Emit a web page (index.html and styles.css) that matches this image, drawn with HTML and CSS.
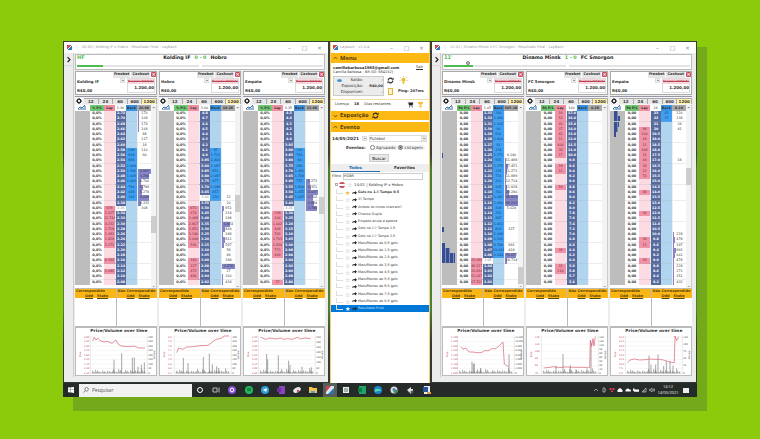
FILE: index.html
```html
<!DOCTYPE html>
<html lang="pt-BR">
<head>
  <meta charset="UTF-8" />
  <title>LayBack</title>
  <link rel="stylesheet" href="styles.css">
</head>
<body>
  <div class="desktop">
    <div class="windows">
      <div class="window game">
        <div class="titlebar">
          <i class="app-icon"></i><span class="dots">⁝</span>
          <span class="title">00:00 | Kolding IF x Hobro - Resultado Final - LayBack</span>
          <span class="controls"><b>–</b><b>□</b><b>×</b></span>
        </div>
        <div class="content">
          <div class="side"><svg viewBox="0 0 9 13"><path d="M3.500 4.500l2.500 2.700l-2.500 2.700"/></svg></div>
          <div class="main">
            <div class="score">
              <span class="time">HF</span>
              <div class="match"><span>Kolding IF</span><em>0 - 0</em><span>Hobro</span></div>
              <div class="progress"><i></i><i></i></div>
            </div>
            <div class="panels" id="left"></div>
          </div>
        </div>
      </div>

      <div class="window menu">
        <div class="titlebar">
          <i class="app-icon"></i>
          <span class="title">Layback - v1.0.4</span>
          <span class="controls"><b>–</b><b>□</b><b>×</b></span>
        </div>
        <div class="bar"><svg viewBox="0 0 6 4"><path d="M1 3L3 1L5 3"/></svg>Menu</div>
        <div class="account">
          <div class="line"><b>camillabarbosa1983@gmail.com</b><u>Sair</u></div>
          <div class="name">Camilla Barbosa - BR (ID: 684152)</div>
          <div class="funds">
            <div class="balance">
              <div><i class="eye"></i><span>Saldo:</span><b>-</b></div>
              <div><span>Exposição:</span><b>R$0,00</b></div>
              <div><span>Disponível:</span><b>-</b></div>
            </div>
            <div class="tools">
              <svg class="refresh" viewBox="0 0 8 8"><path d="M1.3 4A2.7 2.7 0 0 1 6 2.2M6.7 4A2.7 2.7 0 0 1 2 5.8"/><path class="fill" d="M5 3h2.5V.6zM3 5H.5v2.4z"/></svg>
              <svg class="bulb" viewBox="0 0 8 8"><circle cx="4" cy="3.4" r="1.8"/><path d="M3.2 5h1.6v2H3.2z"/><path class="rays" d="M4 0v1M.8 1l.8.6M7.2 1l-.8.6M.4 4h1M6.6 4h1"/></svg>
              <i class="note"></i>
              <b>Ping: 207ms</b>
            </div>
          </div>
        </div>
        <div class="licence">
          <span>Licença</span><b>18</b><span>Dias restantes</span>
          <svg viewBox="0 0 8 8"><path d="M0 1h1.3l1 4h4l1-3.2H2z"/><circle cx="3" cy="6.7" r=".7"/><circle cx="6" cy="6.7" r=".7"/></svg>
          <svg class="trophy" viewBox="0 0 8 8"><path d="M1 1h6c0 2-1 3-2.4 3.4V6H6v1H2V6h1.4V4.4C2 4 1 3 1 1z"/></svg>
        </div>
        <div class="bar exposure"><svg viewBox="0 0 6 4"><path d="M1 1L3 3L5 1"/></svg>Exposição
          <svg class="refresh" viewBox="0 0 8 8"><path d="M1.3 4A2.7 2.7 0 0 1 6 2.2M6.7 4A2.7 2.7 0 0 1 2 5.8"/><path class="fill" d="M5 3h2.5V.6zM3 5H.5v2.4z"/></svg>
        </div>
        <div class="bar"><svg viewBox="0 0 6 4"><path d="M1 3L3 1L5 3"/></svg>Evento</div>
        <div class="filters">
          <div class="row"><b class="date">14/05/2021</b><i class="drop"></i><span class="select">Futebol<i class="drop"></i></span></div>
          <div class="row radios"><b>Eventos:</b><span><i></i>Agrupado <i class="on"></i>Listagem</span></div>
          <button>Buscar</button>
        </div>
        <div class="tabs"><span class="active">Todos</span><span>Favoritos</span></div>
        <div class="search">Filtro: <span>HOBR</span></div>
        <div class="root"><i class="plus"></i><i class="flag"></i><span class="star">☆</span>14:01 | Kolding IF x Hobro</div>
        <div class="tree" id="tree"></div>
      </div>

      <div class="window game right">
        <div class="titlebar">
          <i class="app-icon"></i><span class="dots">⁝</span>
          <span class="title">12:01 | Dinamo Minsk x FC Smorgon - Resultado Final - LayBack</span>
          <span class="controls"><b>–</b><b>□</b><b>×</b></span>
        </div>
        <div class="content">
          <div class="side"><svg viewBox="0 0 9 13"><path d="M3.500 4.500l2.500 2.700l-2.500 2.700"/></svg></div>
          <div class="main">
            <div class="score">
              <span class="time">11'</span>
              <div class="match"><span>Dinamo Minsk</span><em>1 - 0</em><span>FC Smorgon</span></div>
              <div class="progress"><i></i><i></i></div>
              <i class="ball"></i>
            </div>
            <div class="panels" id="right"></div>
          </div>
        </div>
      </div>
    </div>

    <div class="taskbar">
      <svg class="start" viewBox="0 0 6 6"><path d="M0 .6l2.7-.3v2.5H0zM3 .3L6 0v2.8H3zM0 3.1h2.7v2.5L0 5.3zM3 3.1h3V6l-3-.4z"/></svg>
      <div class="find"><svg viewBox="0 0 6 6"><circle cx="3.6" cy="2.3" r="1.8"/><path d="M2.3 3.6L.4 5.6"/></svg>Pesquisar</div>
      <div class="apps" id="apps"></div>
      <div class="tray">
        <svg viewBox="0 0 6 6"><path d="M1 4l2-2l2 2"/></svg>
        <svg viewBox="0 0 6 6"><path d="M2 1h2v4H2zM4 3h1"/></svg>
        <svg class="red" viewBox="0 0 6 6"><path d="M.5 1h2v2h-2zM3.5 1h2v2h-2zM2 3.5h2v1.6H2z"/></svg>
        <svg class="solid" viewBox="0 0 6 6"><path d="M1 5a1.3 1.3 0 0 1 .2-2.4a1.8 1.8 0 0 1 3.5 0A1.3 1.3 0 0 1 5 5z"/></svg>
        <svg class="solid" viewBox="0 0 6 6"><path d="M.7 4.6a1.2 1.2 0 0 1 .5-2a1.7 1.7 0 0 1 3.2 0a1.1 1.1 0 0 1 1 2z"/></svg>
        <svg class="solid" viewBox="0 0 6 6"><path d="M0 1.4h1.5v1H6v2.4H1.5L0 3.6z"/></svg>
        <svg viewBox="0 0 6 6"><path d="M1 5h4V1zM3 5V3"/></svg>
        <svg viewBox="0 0 6 6"><path d="M.5 2.3h1L3 1v4L1.500 3.700h-1zM4 2q.8 1 0 2M5 1.300q1.200 1.700 0 3.400"/></svg>
      </div>
      <div class="clock">14:12<br>14/05/2021</div>
      <i class="notice"></i>
    </div>
  </div>
  <script src="script.js"></script>
</body>
</html>
```
FILE: styles.css
```css
* { box-sizing: border-box; }
body {
  margin: 0;
  width: 760px;
  height: 439px;
  overflow: hidden;
  background: #8ccb0c;
  font-family: "DejaVu Sans", sans-serif;
  font-size: 4px;
  line-height: 5px;
  color: #333;
  white-space: nowrap;
}
i, em { font-style: normal; }
svg { display: block; flex: none; }

.desktop {
  width: 634px;
  height: 356px;
  margin: 41px 0 0 63px;
  box-shadow: 10px 14px 0 #73a91b, 10px 6px 0 #73a91b;
  background: linear-gradient(#3a4038, #39403a 32%, #4c7c38 36%, #507f39 75%, #343a33 85%);
}
.windows {
  display: flex;
  height: 342px;
  padding: 1px 0 0 1px;
}
.window {
  height: 341px;
  overflow: hidden;
}
.game {
  width: 264px;
  height: 340px;
  background: #ececec;
}
.menu {
  width: 100px;
  margin: 0 2px;
  background: #fff;
  border: solid #f4cf72;
  border-width: 0 1px;
}

/* title bar */
.titlebar {
  display: flex;
  align-items: center;
  height: 11px;
  padding-left: 3px;
  background: #fff;
  color: #999;
}
.app-icon {
  width: 5px;
  height: 5px;
  background: linear-gradient(135deg, #d8484f 45%, #e8eef5 45% 52%, #2f7fc4 52%);
}
.dots { width: 10px; text-align: center; }
.menu .titlebar { padding-left: 2px; }
.menu .title { margin-left: 2px; }
.title { font-size: 3.550px; }
.controls {
  display: flex;
  margin-left: auto;
  font-size: 6px;
  color: #888;
}
.controls b { width: 15px; font-weight: normal; text-align: center; }
.game .controls { margin-right: 1px; }

/* match header */
.content { display: flex; }
.side {
  width: 10px;
  height: 324px;
  border-right: 1px solid #ccc;
}
.side svg {
  width: 9px;
  height: 13px;
  border-bottom: 1px solid #ddd;
  fill: none;
  stroke: #222;
  stroke-width: 1.400;
}
.main { width: 251px; padding-left: 1px; }
.right .side { width: 9px; }
.score {
  position: relative;
  height: 16px;
  margin-top: 1px;
  border: 1px solid #bbb;
  background: #fff;
}
.time {
  position: absolute;
  left: 1px;
  top: 0;
  font-size: 5px;
  font-weight: bold;
  color: #4fc04f;
}
.match {
  display: flex;
  justify-content: center;
  gap: 4px;
  height: 10px;
  padding-right: 10px;
  font: bold 4.800px/6px "DejaVu Sans", sans-serif;
  color: #222;
}
.right .match { padding: 0 0 0 2px; }
.match em { color: #3db63d; }
.progress { display: flex; gap: 3px; padding: 0 1px; }
.progress i { flex: 1; height: 2px; background: linear-gradient(90deg, #4dbb4d 26px, #e3e3e3 26px); }
.progress i + i { background: #e3e3e3; }
.right .progress i:first-child { background: linear-gradient(90deg, #4dbb4d 29px, #e3e3e3 29px); }
.ball {
  position: absolute;
  left: 23px;
  top: 6px;
  width: 4px;
  height: 4px;
  border: 1px solid #777;
  border-radius: 50%;
  background: #ccc;
}

/* runner panel */
.panels { display: flex; gap: 2px; margin-top: 1px; }
.panel { width: 82px; flex: none; }
.runner {
  display: flex;
  justify-content: space-between;
  height: 24px;
  border: 1px solid #aaa;
  background: #fff;
  font-weight: bold;
}
.who { display: flex; flex-direction: column; gap: 4px; width: 35px; padding: 7px 0 0 1px; font-size: 3.900px; }
.cash { position: relative; width: 44px; text-align: right; }
.buttons { display: flex; justify-content: flex-end; gap: 1px; height: 6px; font-size: 3.600px; }
.buttons span { background: #e6e6e6; padding: 0 1px; }
.buttons .close {
  width: 5px;
  height: 5px;
  padding: 0;
  border-radius: 1px;
  background: #c94a5e;
  color: #fff;
  font-size: 5px;
  line-height: 5px;
  text-align: center;
}
.stake {
  width: 28px;
  height: 15px;
  margin-left: 15px;
  border: 1px solid #ddd;
  font-size: 4px;
  line-height: 6px;
}
.stake s { display: block; height: 6px; font-size: 2.600px; line-height: 5px; text-align: center; color: #b94455; background: linear-gradient(#f7d8dc 5px, #fff 5px); }
.drop {
  display: inline-block;
  width: 5px;
  height: 5px;
  border: 1px solid #ddd;
  background: linear-gradient(#999, #999) center / 2px 1px no-repeat #eee;
}
.cash .drop { position: absolute; left: 8px; top: 6px; }
.stakes {
  display: flex;
  align-items: center;
  height: 9px;
  margin-top: 1px;
  border-top: 1px solid #9a96aa;
  background: #f3f3f3;
}
.gear { width: 8px; height: 6px; margin-right: 1px; }
.stakes span {
  flex: 1 0 0;
  height: 6px;
  border: solid #aaa;
  border-width: 1px 1px 0 0;
  background: #e7e7e7;
  font: bold 4px/5px "DejaVu Sans", sans-serif;
  text-align: center;
}
.stakes span:last-child { background: #fff2ad; }

/* price ladder: history, p/l, lay, price, back, volume */
.ladder {
  display: flex;
  height: 183px;
  background: #fff;
  border-right: 1px solid #ccc;
}
.rows { width: 76px; }
.step, .head {
  display: grid;
  grid-template-columns: 15px 14px 11px 11px 11px 14px;
  height: 5.270px;
  font: 3.300px/5px "DejaVu Sans", sans-serif;
  text-align: center;
  overflow: hidden;
}
.head { height: 6px; font: bold 3.300px/6px "DejaVu Sans", sans-serif; }
.head svg { width: 8px; height: 5px; margin-left: 3px; fill: none; stroke: #356ca8; }
.head .c1 { background: #70c873; }
.head .c2 { background: #ef8fa2; }
.head .c3 { font-weight: normal; }
.head .c4 { background: #3a91e0; }
.head .c5 { background: #aaa; }
.step > * { border-bottom: 1px solid rgba(170, 170, 170, .22); }
.step .hist { position: relative; background: #bdbdbd; border: 0; }
.hist i { position: absolute; right: 0; top: 0; height: 5px; background: repeating-linear-gradient(90deg, #364f91 0 3px, #8389b8 3px 4px); }
.right .hist i { right: auto; left: 4px; }
.right .panel:first-child .hist i { left: 0; }
.step .pl { font-weight: bold; font-size: 3.500px; }
.lay { background: #fddbe2; }
.lay.on { background: #f292a6; color: #6d2c3c; }
.price { background: #566a9d; color: #fff; font-weight: bold; border-left: 1px solid #eee; }
.price.last { background: #fff; color: #777; font-weight: normal; }
.back { background: #b1d5ef; }
.back.on { background: #3f9ff3; color: #124572; }
.vol { border-left: 1px solid #eee; }
.scroll {
  position: relative;
  width: 5px;
  background: #f3f3f3;
  font-size: 4px;
}
.scroll::before { content: "^"; position: absolute; left: 1px; top: 1px; }
.scroll::after { content: "⌄"; position: absolute; left: 1px; bottom: 0; }
.thumb { position: absolute; left: 0; width: 5px; height: 17px; background: #cdcdcd; }

/* matched bets */
.bets { display: flex; gap: 1px; height: 39px; padding-top: 1px; background: #bbb; }
.bets div { flex: 1; height: 37px; background: #fff; }
.bets p {
  height: 9px;
  margin: 0;
  padding-left: 1px;
  background: #fbb615;
  font: bold 3.500px/4.500px "DejaVu Sans", sans-serif;
  color: #5b450e;
}
.bets u { margin-left: 9px; }
.bets u + u { margin-left: 4px; }
.chart { display: block; width: 82px; height: 49px; border: 1px solid #bbb; background: #fff; }
.chart .heading { font: bold 12.500px "DejaVu Sans", sans-serif; fill: #333; }
.chart .tick { font-size: 7px; fill: #c4455b; }
.chart .tick.r { fill: #444; }
.chart .grid { stroke: #eee; stroke-width: 1.500; }
.chart .axis { stroke: #bbb; fill: none; }
.chart .prices { fill: none; stroke: #d65b6b; stroke-width: 2; }
.chart .volumes { fill: none; stroke: #777; stroke-width: 2; }

/* menu window */
.bar {
  display: flex;
  align-items: center;
  gap: 2px;
  height: 10px;
  padding-left: 2px;
  background: #fdb913;
  font: bold 5.800px/9px "Open Sans", sans-serif;
  color: #4d3908;
}
.bar svg { width: 5px; height: 4px; fill: none; stroke: #4d3908; }
.bar .refresh { width: 7px; height: 7px; margin-left: 1px; stroke: #222; }
.bar.exposure { height: 9px; margin-bottom: 2px; }
.refresh { fill: none; stroke: #222; stroke-width: 1.200; }
.refresh .fill { fill: #222; stroke: none; }
.account { height: 36px; padding: 2px 6px 0 2px; }
.line { display: flex; justify-content: space-between; font-size: 3.600px; }
.line b { font-size: 3.800px; letter-spacing: -.1px; }
.name { font-size: 3.500px; }
.funds { display: flex; margin-top: 1px; }
.balance {
  width: 51px;
  height: 20px;
  border: 1px solid #ccc;
  background: #ececec;
}
.balance div { position: relative; display: flex; height: 6px; line-height: 6px; }
.balance span { width: 29px; text-align: right; }
.balance b { width: 20px; text-align: right; font-size: 3.500px; }
.eye { position: absolute; left: 3px; top: 2px; width: 5px; height: 3px; border-radius: 50%; background: #4c94cf; }
.tools { position: relative; width: 41px; }
.tools > * { position: absolute; }
.tools .refresh { left: 3px; top: 1px; width: 7px; height: 7px; }
.bulb { left: 15px; top: 0; width: 9px; height: 9px; fill: #f1bb35; }
.rays { stroke: #c9a13a; stroke-width: .5; }
.note { left: 4px; top: 12px; width: 5px; height: 7px; border: 1px solid #e3b643; background: #fff3cc; }
.tools b { left: 14px; top: 13px; font-size: 3.700px; }
.licence {
  display: flex;
  align-items: center;
  gap: 5px;
  height: 10px;
  margin-bottom: 2px;
  padding-left: 4px;
  border-top: 1px solid #f6dfa3;
  font-size: 3.700px;
}
.licence svg { width: 7px; height: 7px; margin-left: 11px; fill: #222; }
.licence .trophy { margin-left: -2px; fill: #f4bf43; }
.filters { height: 32px; padding: 2px 2px 0 1px; }
.row { display: flex; align-items: center; height: 9px; }
.date { width: 30px; font-size: 4.300px; }
.select {
  display: flex;
  flex: 1;
  justify-content: space-between;
  align-items: center;
  height: 7px;
  margin-left: 2px;
  border: 1px solid #ddd;
}
.radios b { width: 38px; padding-left: 14px; }
.radios span { display: flex; align-items: center; gap: 1px; width: 55px; background: #f4f4f4; }
.radios i { width: 5px; height: 5px; border: 1px solid #888; border-radius: 50%; background: #fff; }
.radios .on { margin-left: 2px; background: #444; box-shadow: inset 0 0 0 .5px #fff; }
.filters button {
  display: block;
  width: 20px;
  height: 8px;
  margin: 2px 0 0 37px;
  padding: 0;
  border: 1px solid #ccc;
  background: #e9e9e9;
  font: 4px/5px "DejaVu Sans", sans-serif;
}
.tabs {
  display: flex;
  height: 8px;
  background: #eee;
  font: bold 4px/8px "DejaVu Sans", sans-serif;
  text-align: center;
}
.tabs span { flex: 1; }
.tabs .active { color: #286baf; border-bottom: 1px solid #286baf; }
.search { display: flex; height: 8px; margin-top: 1px; padding-left: 1px; font-size: 3.500px; line-height: 7px; }
.search span { width: 80px; height: 7px; margin-left: 1px; border: 1px solid #ccc; line-height: 5px; }
.root { display: flex; align-items: center; height: 7px; margin-bottom: 1px; padding: 0 0 0 4px; font-size: 3.800px; }
.plus { width: 3px; height: 3px; border: 1px solid #aaa; }
.flag { width: 6px; height: 6px; margin: 0 2px 0 1px; border-radius: 50%; background: linear-gradient(#d04d58 35%, #fff 35% 60%, #c54a58 60%); }
.star { width: 7px; font-size: 6px; color: #aaa; }
.leaf {
  display: flex;
  align-items: center;
  height: 7.250px;
  font-size: 3.400px;
}
.leaf::before { content: ""; width: 6px; height: 4px; margin: 0 2px 2px 5px; border-left: 1px solid #ddd; border-bottom: 1px solid #ddd; }
.leaf svg { width: 5px; height: 4px; margin-right: 1px; fill: #222; }
.leaf.first { font-weight: bold; font-size: 3.350px; }
.leaf.first .star { color: #f5b631; }
.leaf.selected { background: #0078d7; color: #c5e2fa; }
.leaf.selected .star { color: #fff; }

/* taskbar */
.taskbar {
  display: flex;
  align-items: center;
  height: 14px;
  background: #252b28;
  color: #eee;
}
.start { width: 6px; height: 6px; margin: 0 5px; fill: #fff; }
.find {
  display: flex;
  align-items: center;
  gap: 3px;
  width: 113px;
  height: 13px;
  padding-left: 4px;
  background: #f2f2f2;
  color: #555;
  font: 4.700px "Open Sans", sans-serif;
}
.find svg { width: 6px; height: 6px; fill: none; stroke: #444; stroke-width: .6; }
.apps { display: flex; }
.apps svg { width: 8px; height: 8px; margin: 3px 4.200px 3px 4px; }
.apps .shown { box-shadow: 0 0 0 3px #566059; background: #566059; }
.tray { display: flex; gap: 2px; margin-left: auto; }
.tray svg { width: 6px; height: 6px; fill: none; stroke: #ddd; stroke-width: .6; }
.tray .solid { fill: #fff; stroke: none; }
.tray .red { fill: #e0374b; stroke: none; }
.clock { width: 24px; margin-left: 1px; font: 4px/6px "Open Sans", sans-serif; text-align: center; }
.notice { width: 6px; height: 5px; margin: 0 8px 0 3px; background: #eee; }
```
FILE: script.js
```js
// "start: [values]" puts the values on consecutive rows from that row on
const left = [
  {
    name: "Kolding IF", total: "20.9K", head: "2.36", last: 18, thumb: 111, pl: "0,0%",
    prices: range(2.72, -0.02, 33, 2),
    lay: { 18: ["978", "2.627", "12.746", "4.232", "2.718", "1.382", "1.424", "2.172"], 28: ["4.292"], 30: ["1.092"] },
    back: { 7: ["248", "809", "886", "2.409", "1.596", "1.009", "2.683", "796", "439", "342"] },
    vol: { 0: ["170", "168", "174", "168", "88", "117", "18", "110", "90"], 11: ["4.992", "3.299", "4.706", "5.799", "5.278", "8.004", "4.332", "308"] },
    bars: { 0: [1, 1, 1, 1], 11: [13, 11, 3, 5, 4, 11, 3] },
    line: "50,38 55,28 60,36 65,30 72,38 85,42 95,40 108,46 120,36 126,48 136,54 160,56 175,54 188,60 207,60",
    peaks: { 114: 41, 137: 60, 169: 47, 175: 48, 186: 20, 196: 26, 205: 33 },
    ticks: ["3.00", "2.90", "2.80", "2.70", "2.60", "2.50", "2.40", "2.30", "2.20"], vols: ["400", "350", "300", "250", "200", "150", "100", "50", "0"]
  },
  {
    name: "Hobro", total: "19.2K", head: "3.60", last: 16, thumb: 90, pl: "0,0%",
    prices: range(4.8, -0.1, 8, 1).concat(["4.0"], range(3.95, -0.05, 20, 2), range(2.98, -0.02, 4, 2)),
    lay: { 18: ["972", "674", "3.088", "2.867", "2.851", "1.140", "1.009", "591"], 28: ["342", "327", "472", "486"] },
    back: { 7: ["95", "1.712", "2.404", "1.187", "851", "2.087", "977", "1.288", "457", "120"] },
    vol: { 16: ["12", "20", "951", "214", "198", "1.854", "864", "288", "811", "597", "58", "84", "284", "3.578", "27", "310", "418"] },
    bars: { 18: [2, 1, 1, 8, 3, 1, 3, 2], 29: [13], 31: [1, 1] },
    line: "50,74 56,60 68,64 80,57 100,56 120,53 145,52 155,44 168,34 183,31 193,24 207,24",
    peaks: { 70: 46, 84: 31, 130: 49, 148: 59, 157: 27, 170: 21, 176: 16 },
    ticks: ["5.0", "4.8", "4.6", "4.4", "4.2", "4.0", "3.8", "3.6", "3.4"], vols: ["400", "350", "300", "250", "200", "150", "100", "50", "0"]
  },
  {
    name: "Empate", total: "13.0K", head: "3.35", last: 18, thumb: 92, pl: "0,0%",
    prices: range(4.5, -0.1, 6, 1).concat(range(3.95, -0.05, 20, 2), range(2.98, -0.02, 7, 2)),
    lay: { 19: ["238", "204", "1.002", "848", "582", "1.763", "1.836", "773", "469"], 32: ["57"] },
    back: { 7: ["143", "791", "94", "386", "1.481", "1.709", "755", "1.810", "1.055", "1.047"] },
    vol: { 13: ["1.273", "6.351", "8.037", "2.702", "2.884", "3.784"] },
    bars: { 13: [4, 5, 12, 7, 8, 11] },
    line: "50,28 65,34 78,30 95,33 110,30 118,34 130,32 145,34 160,28 170,33 183,30 200,32",
    peaks: { 68: 58, 71: 42, 103: 54, 134: 38, 138: 25, 174: 20, 202: 18 },
    ticks: ["3.70", "3.60", "3.50", "3.40", "3.30", "3.20", "3.10", "3.00", "2.90"], vols: ["350", "300", "250", "200", "150", "100", "50", "0"]
  }
];

const right = [
  {
    name: "Dinamo Minsk", total: "305.1K", head: "1.05", last: 28, thumb: 162, pl: "0,00",
    prices: range(1.33, -0.01, 33, 2),
    lay: { 28: ["22.698", "49.117", "26.836", "51.027", "67.522"] },
    back: { 0: ["240", "1.480", "1.105", "90", "501", "1.904", "81", "158", "1.271", "581", "1.275", "335", "726", "262", "105", "310", "1.083", "1.096", "309", "256", "487", "1.452", "864", "2.098", "1.296", "8.788", "14.408", "2.244"] },
    vol: { 8: ["4.140", "11.488", "27.451", "11.272", "11.889", "12.714", "11.928", "28.286", "88.823", "88.232", "5.624"], 22: ["327"], 25: ["991", "418", "76.677", "18.714"] },
    bars: { 9: [1, 3, 2, 1, 1, 2, 4, 13, 13], 27: [11, 2] },
    hist: { 8: [1], 22: [2], 25: [3, 8, 13, 13] },
    line: "55,56 60,64 68,60 78,72 90,72 100,74 115,74 125,68 138,68 145,62 158,62 168,54 180,42 184,108 190,112 197,116",
    peaks: { 87: 35, 91: 28, 94: 30, 104: 12, 113: 16, 198: 57 },
    ticks: ["1.400", "1.350", "1.300", "1.250", "1.200", "1.150", "1.100", "1.050", "1.000"], vols: ["12.000", "10.000", "9.000", "8.000", "6.000", "4.000", "2.000", "1.000", "0"]
  },
  {
    name: "FC Smorgon", total: "4.2K", head: "160", last: -1, thumb: 0, pl: "0,00",
    prices: ["17.0", "16.0", "15.0", "14.0", "13.0", "12.0", "11.5", "11.0"].concat(["10.0"], range(9.8, -0.2, 20, 1), range(5.9, -0.1, 4, 1)),
    lay: { 0: ["19", "53", "42", "37", "42", "11", "400", "38", "17"], 10: ["18", "11"], 14: ["54"], 26: ["38"], 29: ["31", "110"] },
    back: {}, vol: {}, bars: {},
    line: "50,120 70,118 80,116 95,119 115,117 140,118 165,118 182,119 188,119 190,36 194,55 198,32 201,54 205,26",
    peaks: { 87: 22, 108: 58, 130: 24, 147: 12, 180: 14, 192: 93 },
    ticks: ["140", "120", "100", "80", "60", "40"], vols: ["130", "120", "110", "90", "80", "60", "50", "30", "10", "0"]
  },
  {
    name: "Empate", total: "8.1K", head: "24", last: -1, thumb: 63, pl: "0,00",
    prices: ["23", "22", "21", "20", "19.5", "19.0", "18.5", "18.0", "17.5", "17.0", "16.5", "16.0", "15.5", "15.0", "14.5", "14.0", "13.5", "13.0", "12.5", "12.0", "11.5", "11.0", "10.5", "10.0"].concat(range(9.8, -0.2, 9, 1)),
    lay: { 3: ["98", "200", "44", "11", "448", "31", "44", "38", "12", "70"], 15: ["48"], 19: ["36"], 24: ["34", "11"], 28: ["29"] },
    back: { 0: ["43", "37"] },
    vol: { 0: ["120", "138", "34", "41"], 9: ["18"], 23: ["228", "478", "197", "991", "661", "478", "228", "171", "351", "432"] },
    bars: { 23: [1, 2, 1, 3, 2, 1, 1, 1, 1, 1] },
    hist: { 0: [4], 1: [6], 2: [5], 3: [4], 4: [2] },
    line: "50,104 57,96 70,93 85,96 105,95 118,93 130,94 145,94 157,96 170,100 182,103 190,104 192,24 197,38 203,26",
    peaks: { 114: 53, 120: 26, 134: 26, 141: 56, 158: 22, 166: 37, 177: 36, 186: 23 },
    ticks: ["25.0", "22.5", "20.0", "17.5", "15.0", "12.5", "10.0", "7.5", "5.0"], vols: ["120", "100", "75", "50", "25", "0"]
  }
];

function range(from, step, count, digits) {
  return Array.from({ length: count }, (_, i) => (from + step * i).toFixed(digits));
}

function spread(data) {
  const rows = [];
  for (const start in data || {}) {
    data[start].forEach((v, i) => rows[+start + i] = v);
  }
  return rows;
}

function ladder(p) {
  const lay = spread(p.lay), back = spread(p.back), vol = spread(p.vol);
  const bars = spread(p.bars), hist = spread(p.hist);
  let html = `<div class="head"><svg viewBox="0 0 8 5"><path d="M0 4l2-2l2 1l3-3M1 5V4M3 5V3M5 5V3M7 5V1"/></svg>
    <span class="c1">${p.pl === "0,00" ? "R$" : "%"} P/L</span><span class="c2">Lay</span><span class="c3">${p.head}</span><span class="c4">Back</span><span class="c5">${p.total}</span></div>`;
  for (let i = 0; i < 33; i++) {
    const bar = bars[i] ? `style="background:linear-gradient(90deg,#8585c9 ${bars[i]}px,#fff ${bars[i]}px)"` : "";
    html += `<div class="step">
      <span class="hist">${hist[i] ? `<i style="width:${hist[i]}px"></i>` : ""}</span>
      <span class="pl">${p.pl}</span>
      <span class="lay ${lay[i] ? "on" : ""}">${lay[i] || ""}</span>
      <span class="price ${i === p.last ? "last" : ""}">${p.prices[i]}</span>
      <span class="back ${back[i] ? "on" : ""}">${back[i] || ""}</span>
      <span class="vol" ${bar}>${vol[i] || ""}</span>
    </div>`;
  }
  const thumb = p.thumb ? `<i class="thumb" style="top:${p.thumb}px"></i>` : "";
  return `<div class="ladder"><div class="rows">${html}</div><div class="scroll">${thumb}</div></div>`;
}

function chart(p) {
  let out = "";
  p.ticks.forEach((t, i) => {
    const y = 27 + i * 108 / (p.ticks.length - 1);
    out += `<path class="grid" d="M43 ${y}H214"/><text class="tick" x="24" y="${y + 2}">${t}</text>`;
  });
  p.vols.forEach((t, i) => {
    out += `<text class="tick r" x="217" y="${29 + i * 108 / (p.vols.length - 1)}">${t}</text>`;
  });
  let bars = "";
  for (let x = 50; x < 208; x += 3) {
    bars += `M${x} 136v-${2 + (x * 37 % 23) * (x * 13 % 7) / 10}`;
  }
  for (const x in p.peaks) bars += `M${x} 136v-${p.peaks[x]}`;
  return `<svg class="chart" viewBox="0 0 240 141" preserveAspectRatio="none">
    <text class="heading" x="43" y="13" textLength="171" lengthAdjust="spacingAndGlyphs">Price/Volume over time</text>
    ${out}<path class="axis" d="M43 22V136H214V22"/>
    <path class="volumes" d="${bars}"/><polyline class="prices" points="${p.line}"/>
    <text class="tick" transform="translate(16 88) rotate(-90)">Price</text>
    <text class="tick r" transform="translate(238 94) rotate(-90)">Volume</text>
  </svg>`;
}

function panel(p) {
  return `<div class="panel">
    <div class="runner">
      <div class="who"><span>${p.name}</span><span>R$0,00</span></div>
      <div class="cash">
        <div class="buttons"><span>Freebet</span><span>Cashout</span><span class="close">×</span></div>
        <i class="drop"></i>
        <div class="stake"><s>Responsabilidade</s>1.200,00</div>
      </div>
    </div>
    <div class="stakes">
      <svg class="gear" viewBox="0 0 8 6"><circle cx="4" cy="3" r="1.700" fill="none" stroke="#222" stroke-width="1.100"/><path d="M4 0v1M4 5v1M1 3h1M6 3h1M2 1l.7.700M6 1l-.7.700M2 5l.700-.700M6 5l-.700-.700" stroke="#222"/></svg>
      <span>12</span><span>24</span><span>60</span><span>600</span><span>1200</span>
    </div>
    ${ladder(p)}
    <div class="bets">
      <div><p>Correspondido<br><u>Odd</u><u>Stake</u></p></div>
      <div><p>Não Correspondido<br><u>Odd</u><u>Stake</u></p></div>
    </div>
    ${chart(p)}
  </div>`;
}

document.getElementById("left").innerHTML = left.map(panel).join("");
document.getElementById("right").innerHTML = right.map(panel).join("");

const markets = ["Gols no 1.º Tempo 0.5", "1º Tempo", "Ambos os times marcam?", "Chance Dupla", "Empate anula a aposta", "Gols no 1.º Tempo 1.5", "Gols no 1.º Tempo 2.5"];
for (let i = 0; i <= 8; i++) markets.push(`Mais/Menos de ${i},5 gols`);
markets.push("Resultado Final");
document.getElementById("tree").innerHTML = markets.map((m, i) => {
  const cls = i === 0 ? "first" : i === 16 ? "selected" : "";
  return `<div class="leaf ${cls}"><span class="star">${cls ? "★" : "☆"}</span><svg viewBox="0 0 5 4"><path d="M0 3q0-2 3-2V0l2 1.700L3 3.400V2.400Q1 2 0 3z"/></svg>${m}</div>`;
}).join("");

const apps = [
  '<circle cx="4" cy="4" r="2.500" fill="none" stroke="#fff"/>',
  '<path d="M1 2h4v4H1zM7 1.500v5" fill="none" stroke="#ddd" stroke-width=".8"/>',
  '<circle cx="4" cy="4" r="4" fill="#8b4fe0"/><circle cx="4" cy="4" r="1.800" fill="none" stroke="#fff"/>',
  '<circle cx="4" cy="4" r="4" fill="#1fbc5b"/><path d="M2 3q2-1 4 .3M2.300 4.500q1.700-.7 3.400.3" fill="none" stroke="#14351f" stroke-width=".7"/>',
  '<circle cx="4" cy="4" r="4" fill="#2d9bdc"/><path d="M1.500 4l4.500-2l-.8 4l-1.500-1.200z" fill="#fff"/>',
  '<path d="M2 0h6v8H2z" fill="#8a45ba"/><path d="M0 2h4v4H0z" fill="#6d2c9f"/>',
  '<ellipse cx="4" cy="4" rx="4" ry="2.500" fill="#e4e8ee" transform="rotate(-25 4 4)"/><circle cx="5" cy="5" r="1.200" fill="#d04b50"/>',
  '<path d="M0 1h3l1 1h4v5H0z" fill="#f2c34e"/><path d="M2 5h4v2H2z" fill="#4da3dc"/>',
  '<path d="M0 0h8v8H0z" fill="#dce6ef"/><path d="M0 0h5L0 6z" fill="#cf4455"/><path d="M8 2v6H2z" fill="#2f75b5"/>',
  '<path d="M1 1h6v6H1z" fill="#e9eef1"/><path d="M2 3h4M2 5h4" stroke="#577"/>',
  '<path d="M1 0h7v8H1z" fill="#21a366"/><path d="M0 2h4v4H0z" fill="#107c41"/>',
  '<circle cx="4" cy="4" r="4" fill="#1688cf"/><path d="M1 6q-1-4 4-3q2 .4 2 2H4z" fill="#5cd3a3"/>',
  '<circle cx="4" cy="4" r="3.500" fill="#ddd"/><circle cx="5.500" cy="5.500" r="2" fill="#4a8f55"/><circle cx="4" cy="3.500" r="1.500" fill="#4a7fd0"/>',
  '<path d="M1 4l4-3v2h2v3H5v2z" fill="#e5e5e5"/><circle cx="6" cy="6" r="1.500" fill="#555"/>',
  '<path d="M1 0h6v8H1z" fill="#e9edf5"/><path d="M0 1h5v5H0z" fill="#2b579a"/><path d="M4 6h4v2H4z" fill="#e2a33f"/>'
];
document.getElementById("apps").innerHTML = apps.map((a, i) => `<svg class="${i === 8 ? "shown" : ""}" viewBox="0 0 8 8">${a}</svg>`).join("");
```
